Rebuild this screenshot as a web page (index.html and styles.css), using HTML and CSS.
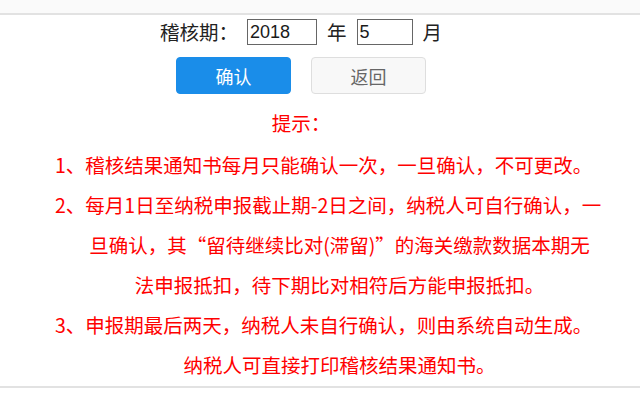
FILE: index.html
```html
<!DOCTYPE html>
<html lang="zh-CN">
<head>
<meta charset="utf-8">
<title>稽核结果确认</title>
<link rel="stylesheet" href="styles.css">
</head>
<body>
<div class="topbar"></div>
<main class="content">
  <form class="period">
    <span class="label">稽核期：</span>
    <input class="field field-year" type="text" value="2018">
    <span class="unit">年</span>
    <input class="field field-month" type="text" value="5">
    <span class="unit">月</span>
  </form>
  <div class="actions">
    <button class="btn btn-primary" type="button">确认</button>
    <button class="btn btn-default" type="button">返回</button>
  </div>
  <h3 class="tips-title">提示：</h3>
</main>
<div class="tips">
  <p class="tip lead">1、稽核结果通知书每月只能确认一次，一旦确认，不可更改。</p>
  <p class="tip lead">2、每月1日至纳税申报截止期-2日之间，纳税人可自行确认，一</p>
  <p class="tip">旦确认，其“留待继续比对(滞留)”的海关缴款数据本期无</p>
  <p class="tip">法申报抵扣，待下期比对相符后方能申报抵扣。</p>
  <p class="tip lead">3、申报期最后两天，纳税人未自行确认，则由系统自动生成。</p>
  <p class="tip">纳税人可直接打印稽核结果通知书。</p>
</div>
<div class="footer-line"></div>
</body>
</html>
```

FILE: styles.css
```css
body {
  margin: 0;
  background: #fff;
  font-family: "Noto Sans CJK SC", "Liberation Sans", sans-serif;
}

.topbar {
  height: 13px;
  background: #fafafa;
  border-bottom: 2px solid #e2e2e2;
}

.content {
  width: 602px;
}

.period {
  display: flex;
  align-items: center;
  justify-content: center;
  height: 26px;
  margin: 4px 0 0;
  font-size: 19.5px;
  line-height: 26px;
  color: #222;
}

.label {
  margin-right: 9px;
}

.field {
  box-sizing: border-box;
  height: 26px;
  margin: 0;
  padding: 0 2px;
  border: 1px solid #666;
  border-radius: 0;
  background: #fff;
  font-family: "Liberation Sans", Arial, sans-serif;
  font-size: 18px;
  color: #1a1a1a;
  outline: none;
}

.field-year {
  width: 70px;
}

.field-month {
  width: 56px;
  margin-left: 10px;
}

.unit {
  margin-left: 10px;
}

.actions {
  display: flex;
  justify-content: center;
  gap: 20px;
  margin-top: 12px;
}

.btn {
  box-sizing: border-box;
  width: 115px;
  height: 37px;
  padding: 0;
  border-radius: 4px;
  font-family: "Noto Sans CJK SC", sans-serif;
  font-size: 18px;
  cursor: pointer;
}

.btn-primary {
  background: #1a8de9;
  border: 1px solid #1a8de9;
  color: #fff;
}

.btn-default {
  background: #f8f8f8;
  border: 1px solid #dedede;
  color: #666;
}

.tips-title {
  margin: 9px 0 0;
  font-size: 19.5px;
  font-weight: normal;
  line-height: 40px;
  color: #f00;
  text-align: center;
}

.tips {
  width: 569px;
  margin: 2px 0 0 55px;
  font-size: 19.5px;
  line-height: 40px;
  color: #f00;
  text-align: center;
}

.tip {
  margin: 0;
  white-space: nowrap;
}

.tip.lead {
  text-align: left;
}

.footer-line {
  margin-top: 1px;
  border-top: 2px solid #e2e2e2;
}
```
